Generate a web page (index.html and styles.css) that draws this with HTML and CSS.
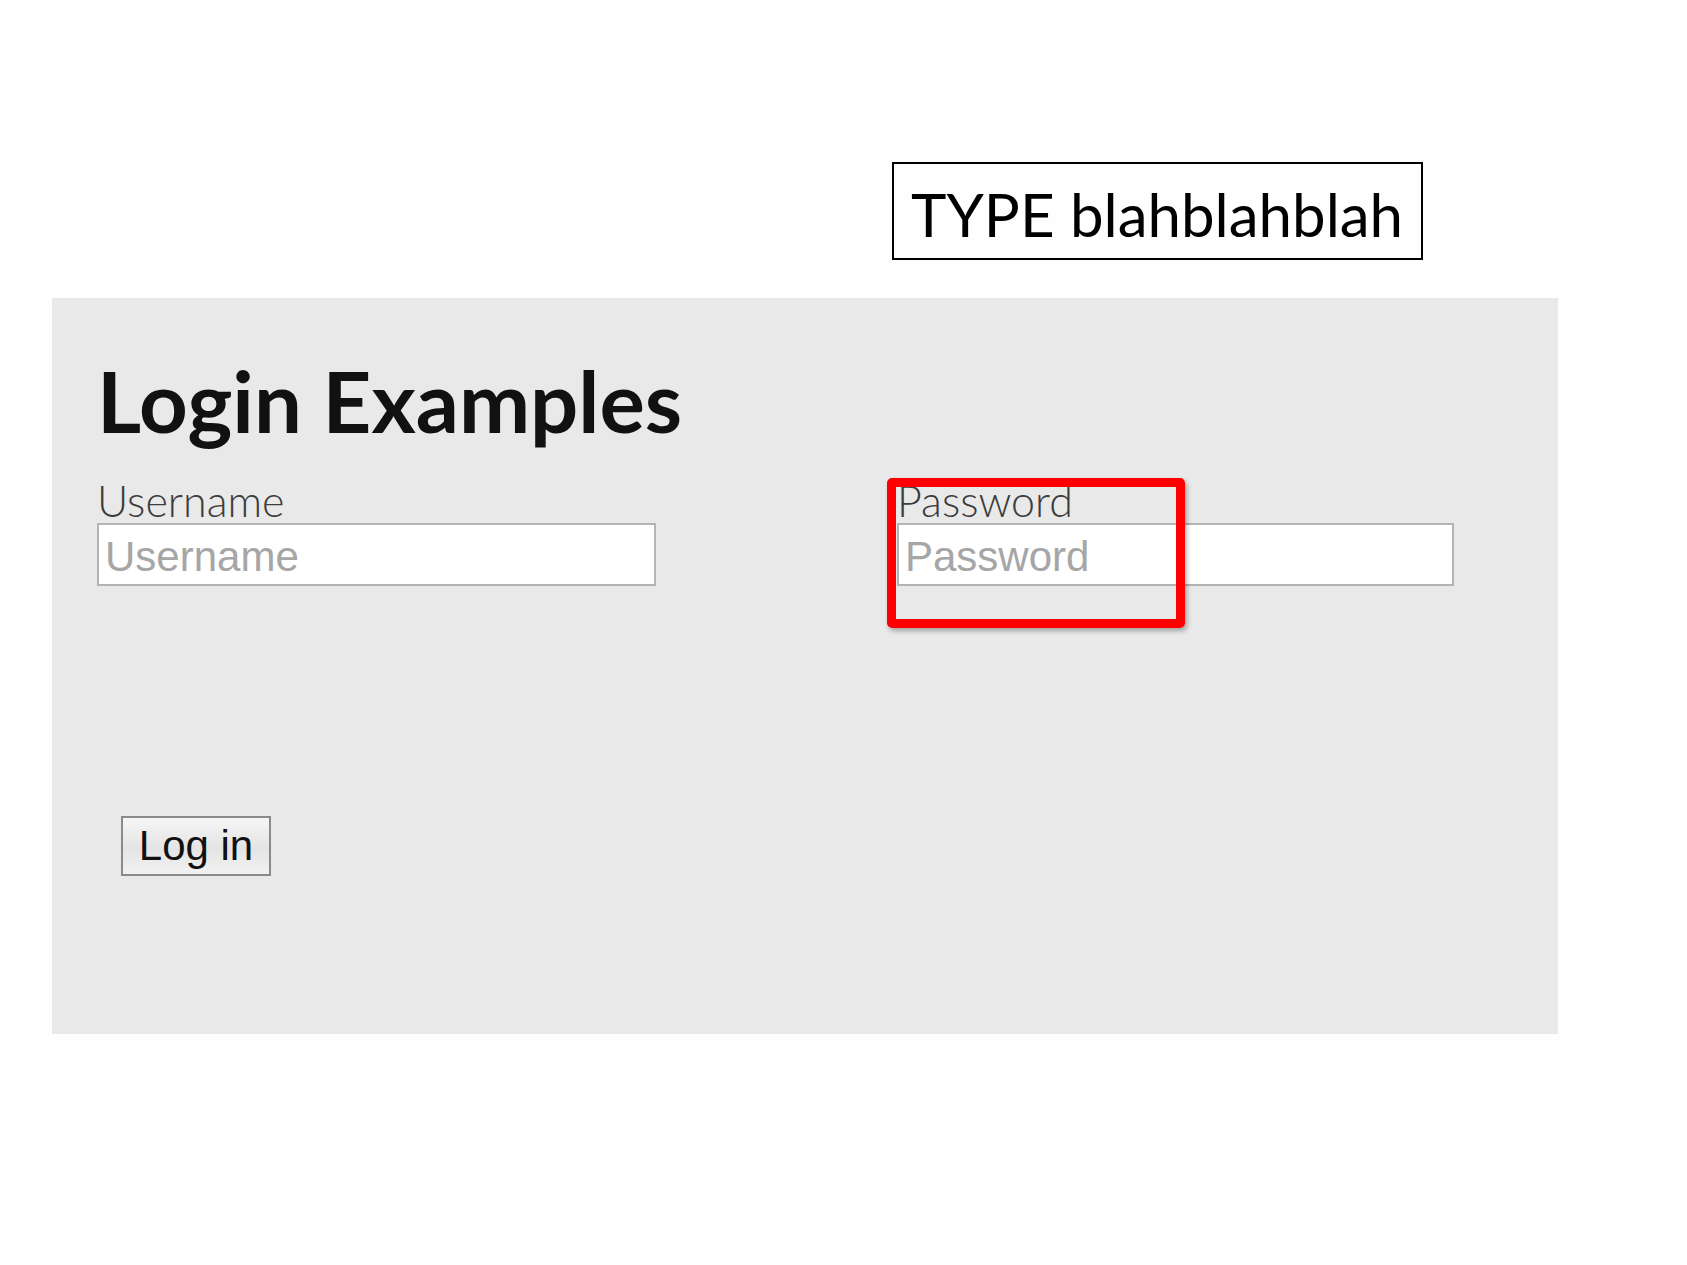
FILE: index.html
```html
<!DOCTYPE html>
<html lang="en">
<head>
<meta charset="utf-8">
<title>Login Examples</title>
<link rel="stylesheet" href="styles.css">
</head>
<body>
<div class="note-row">
  <div class="note">TYPE blahblahblah</div>
</div>
<section class="panel">
  <h1 class="title">Login Examples</h1>
  <div class="fields">
    <div class="field">
      <label class="label" for="u">Username</label>
      <input class="input input-user" id="u" type="text" placeholder="Username">
    </div>
    <div class="field">
      <label class="label" for="p">Password</label>
      <input class="input input-pass" id="p" type="password" placeholder="Password">
    </div>
  </div>
  <button class="login" type="button">Log in</button>
  <div class="highlight"></div>
</section>
</body>
</html>
```
FILE: styles.css
```css
html, body {
  margin: 0;
  padding: 0;
  background: #fefefe;
}
body {
  width: 1687px;
  height: 1265px;
  font-family: Lato, "Liberation Sans", sans-serif;
}
.note-row {
  padding: 162px 0 0 892px;
}
.note {
  box-sizing: border-box;
  width: 531px;
  height: 98px;
  border: 2px solid #000;
  padding: 4px 0 0 17px;
  font-family: Lato, "Open Sans", sans-serif;
  font-size: 60px;
  line-height: 92px;
  color: #000;
  white-space: nowrap;
}
.panel {
  position: relative;
  box-sizing: border-box;
  margin: 38px 0 0 52px;
  width: 1506px;
  height: 736px;
  background: #e9e9e9;
  padding: 60px 0 0 45px;
}
.title {
  margin: 0;
  font-family: Lato, sans-serif;
  font-weight: 700;
  font-size: 85px;
  line-height: 84px;
  color: #111;
  letter-spacing: 0;
}
.fields {
  display: grid;
  grid-template-columns: 559px 557px;
  column-gap: 241px;
  margin-top: 36px;
}
.field {
  display: flex;
  flex-direction: column;
}
.label {
  font-family: Lato, sans-serif;
  font-weight: 300;
  font-size: 43px;
  line-height: 45px;
  color: #3c3c3c;
  height: 45px;
}
.input {
  box-sizing: border-box;
  height: 63px;
  width: 100%;
  border: 2px solid #b4b4b4;
  background: #fff;
  margin: 0;
  padding: 4px 6px 0 6px;
  font-family: "Liberation Sans", Arial, sans-serif;
  font-size: 42px;
  color: #222;
  outline: none;
}
.input::placeholder {
  color: #a6a6a6;
  opacity: 1;
}
.login {
  display: block;
  box-sizing: border-box;
  margin: 230px 0 0 24px;
  width: 150px;
  height: 60px;
  border: 2px solid #8a8a8a;
  border-radius: 0;
  background: linear-gradient(#f6f6f6, #e4e4e4 55%, #f2f2f2);
  padding: 0;
  font-family: "Liberation Sans", Arial, sans-serif;
  font-size: 42px;
  line-height: 54px;
  color: #111;
}
.highlight {
  position: absolute;
  left: 835px;
  top: 180px;
  box-sizing: border-box;
  width: 298px;
  height: 150px;
  border: 9px solid #ff0000;
  border-radius: 5px;
  box-shadow: 2px 3px 5px rgba(0, 0, 0, 0.3);
}
```
